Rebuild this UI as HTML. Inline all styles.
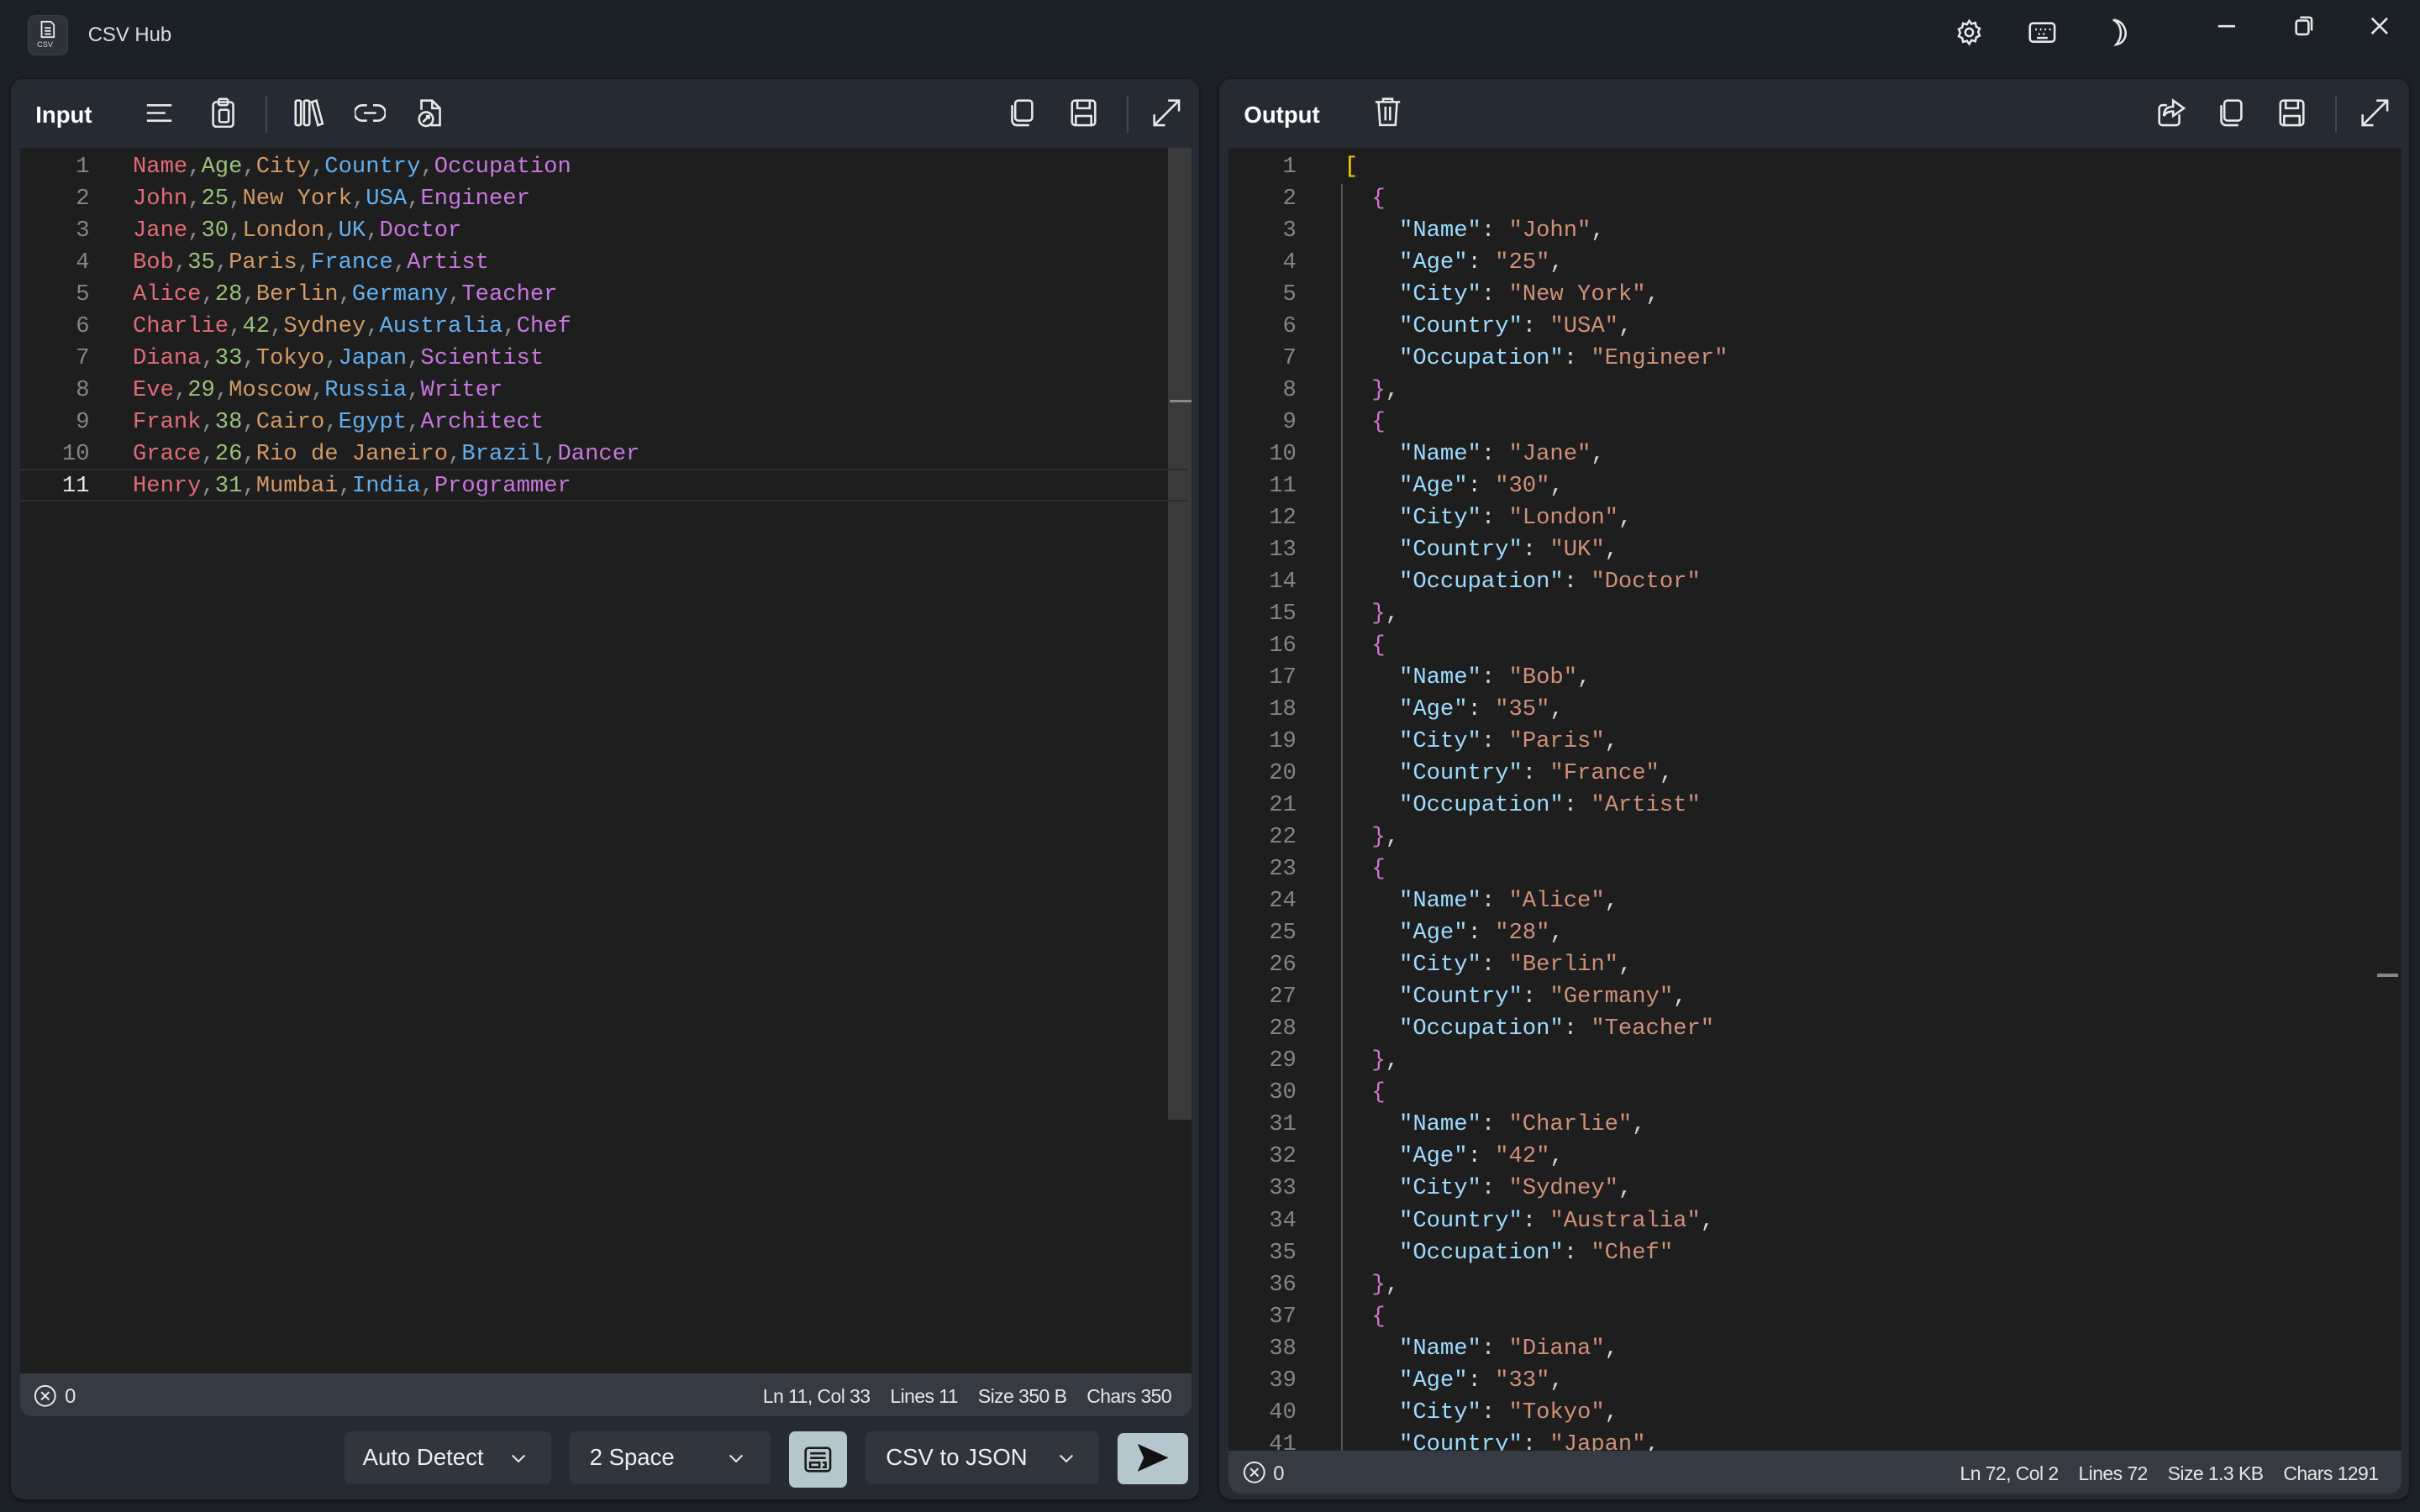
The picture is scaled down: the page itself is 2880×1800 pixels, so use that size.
<!DOCTYPE html>
<html><head><meta charset="utf-8"><style>
html,body{margin:0;padding:0;background:#1c2027;overflow:hidden;width:2880px;height:1800px}
#w{position:relative;width:1568px;height:980px;zoom:1.83673;font-family:"Liberation Sans",sans-serif;color:#e6e6e6;background:#1c2027}
.a{position:absolute}
.panel{position:absolute;background:#262b33;border-radius:8px;box-shadow:0 1px 3px rgba(0,0,0,.5)}
.ed{position:absolute;background:#1e1e1e}
.code{position:absolute;font-family:"Liberation Mono",monospace;font-size:14.8px;line-height:20.7px;white-space:pre}
.ln{position:absolute;font-family:"Liberation Mono",monospace;font-size:14.8px;line-height:20.7px;text-align:right;color:#858585;white-space:pre}
.r{color:#e06c75}.g{color:#98c379}.o{color:#d19a66}.bl{color:#61afef}.pu{color:#c678dd}.c{color:#8a8a8a}
.k{color:#9cdcfe}.s{color:#ce9178}.p{color:#d4d4d4}.b{color:#da70d6}.y{color:#ffd700}
.status{position:absolute;background:#363a42;font-size:13px;color:#e6e6e6}
.st{position:absolute;font-size:12.5px;letter-spacing:-0.3px;text-align:right;white-space:nowrap}
.st span{margin-left:13px}
.dd{position:absolute;top:928px;height:34px;background:#30353e;border-radius:4px;font-size:15px;color:#eee;line-height:34px}
svg{position:absolute;fill:none;stroke:#e8e8e8;stroke-width:1.4}
</style></head><body><div id="w">
<!-- title bar -->
<div class="a" style="left:18px;top:10px;width:25px;height:25px;background:#2e323b;border-radius:5px;border:1px solid #3a3f48"></div>
<svg style="left:24px;top:13px" width="14" height="14" viewBox="0 0 14 14"><path d="M3 1h6l2 2v8H3z M5 5h4 M5 7h4 M5 9h4" stroke-width="1"/></svg>
<div class="a" style="left:24px;top:26px;font-size:5px;color:#ddd">CSV</div>
<div class="a" style="left:57px;top:15px;font-size:13px;color:#ddd">CSV Hub</div>
<svg style="left:1267px;top:12px" width="18" height="18" viewBox="0 0 18 18"><circle cx="9" cy="9" r="2.5"/><path d="M9 1.5l1.5 2 2.5-.7.5 2.5 2.3 1.2-1 2.3 1 2.3-2.3 1.2-.5 2.5-2.5-.7L9 16.5l-1.5-2-2.5.7-.5-2.5-2.3-1.2 1-2.3-1-2.3 2.3-1.2.5-2.5 2.5.7z"/></svg>
<svg style="left:1314px;top:13px" width="19" height="16" viewBox="0 0 19 16"><rect x="1.5" y="2" width="16" height="12" rx="2"/><path d="M5 6h1M8 6h1M11 6h1M14 6h1M7 9h1M10 9h1M6 11.5h7"/></svg>
<svg style="left:1362px;top:11px" width="18" height="20" viewBox="0 0 18 20"><path d="M7 2c5 2 7 10 2 16 6-1 8-8 4-13-1.5-2-4-3-6-3z"/></svg>
<svg style="left:1436px;top:12px" width="14" height="10" viewBox="0 0 14 10"><path d="M1 5h11"/></svg>
<svg style="left:1486px;top:10px" width="14" height="14" viewBox="0 0 14 14"><rect x="2" y="3.5" width="8" height="9" rx="1.5"/><path d="M4.5 1.5h6a1.5 1.5 0 0 1 1.5 1.5v7"/></svg>
<svg style="left:1535px;top:10px" width="14" height="14" viewBox="0 0 14 14"><path d="M2 2l10 10M12 2L2 12"/></svg>

<!-- LEFT PANEL -->
<div class="panel" style="left:7px;top:51px;width:770px;height:921px"></div>
<div class="a" style="left:23px;top:66px;font-size:15px;font-weight:bold;color:#fff">Input</div>
<svg style="left:94px;top:64px" width="20" height="18" viewBox="0 0 20 18"><path d="M1 4h16M1 9h12M1 14h16"/></svg>
<svg style="left:136px;top:63px" width="18" height="20" viewBox="0 0 18 20"><rect x="2" y="3" width="13" height="16" rx="2"/><rect x="5.5" y="1" width="6" height="4" rx="1"/><rect x="6" y="8" width="6" height="8" rx="1"/></svg>
<div class="a" style="left:172px;top:62px;width:1px;height:24px;background:#444a54"></div>
<svg style="left:190px;top:63px" width="20" height="20" viewBox="0 0 20 20"><rect x="1.5" y="2" width="3.5" height="16" rx="1"/><rect x="7" y="2" width="3.5" height="16" rx="1"/><path d="M12 3l3-1 4 15-3 1z"/></svg>
<svg style="left:230px;top:64px" width="20" height="18" viewBox="0 0 20 18"><path d="M8 4H5a5 5 0 0 0 0 10h3M12 4h3a5 5 0 0 1 0 10h-3M6 9h8"/></svg>
<svg style="left:270px;top:63px" width="18" height="20" viewBox="0 0 18 20"><path d="M3 8V2h7l5 5v11h-6M10 2v5h5"/><circle cx="6" cy="14" r="4.5"/><path d="M4 16l4-4M6 12h2v2"/></svg>
<svg style="left:653px;top:63px" width="18" height="20" viewBox="0 0 18 20"><rect x="5" y="2" width="11" height="13" rx="2"/><path d="M3 5v10a3 3 0 0 0 3 3h8"/></svg>
<svg style="left:693px;top:63px" width="18" height="20" viewBox="0 0 18 20"><rect x="1.5" y="2" width="15" height="16" rx="2"/><path d="M5 2v5h8V2M4 18v-6h10v6"/></svg>
<div class="a" style="left:730px;top:62px;width:1px;height:24px;background:#444a54"></div>
<svg style="left:746px;top:63px" width="20" height="20" viewBox="0 0 20 20"><path d="M2 18L18 2M11 2h7v7M2 11v7h7"/></svg>

<div class="ed" style="left:13px;top:96px;width:759px;height:794px"></div>
<div class="a" style="left:757px;top:96px;width:15px;height:630px;background:#3a3a3a"></div>
<div class="a" style="left:758px;top:259px;width:14px;height:2px;background:#888"></div>
<div class="a" style="left:13px;top:304px;width:757px;height:19px;border-top:1.5px solid #2e2e2e;border-bottom:1.5px solid #2e2e2e"></div>
<div class="ln" style="left:20px;top:98px;width:38px">1
2
3
4
5
6
7
8
9
10
<span style="color:#e6e6e6">11</span></div>
<div class="code" style="left:86px;top:98px"><span class="r">Name</span><span class="c">,</span><span class="g">Age</span><span class="c">,</span><span class="o">City</span><span class="c">,</span><span class="bl">Country</span><span class="c">,</span><span class="pu">Occupation</span>
<span class="r">John</span><span class="c">,</span><span class="g">25</span><span class="c">,</span><span class="o">New York</span><span class="c">,</span><span class="bl">USA</span><span class="c">,</span><span class="pu">Engineer</span>
<span class="r">Jane</span><span class="c">,</span><span class="g">30</span><span class="c">,</span><span class="o">London</span><span class="c">,</span><span class="bl">UK</span><span class="c">,</span><span class="pu">Doctor</span>
<span class="r">Bob</span><span class="c">,</span><span class="g">35</span><span class="c">,</span><span class="o">Paris</span><span class="c">,</span><span class="bl">France</span><span class="c">,</span><span class="pu">Artist</span>
<span class="r">Alice</span><span class="c">,</span><span class="g">28</span><span class="c">,</span><span class="o">Berlin</span><span class="c">,</span><span class="bl">Germany</span><span class="c">,</span><span class="pu">Teacher</span>
<span class="r">Charlie</span><span class="c">,</span><span class="g">42</span><span class="c">,</span><span class="o">Sydney</span><span class="c">,</span><span class="bl">Australia</span><span class="c">,</span><span class="pu">Chef</span>
<span class="r">Diana</span><span class="c">,</span><span class="g">33</span><span class="c">,</span><span class="o">Tokyo</span><span class="c">,</span><span class="bl">Japan</span><span class="c">,</span><span class="pu">Scientist</span>
<span class="r">Eve</span><span class="c">,</span><span class="g">29</span><span class="c">,</span><span class="o">Moscow</span><span class="c">,</span><span class="bl">Russia</span><span class="c">,</span><span class="pu">Writer</span>
<span class="r">Frank</span><span class="c">,</span><span class="g">38</span><span class="c">,</span><span class="o">Cairo</span><span class="c">,</span><span class="bl">Egypt</span><span class="c">,</span><span class="pu">Architect</span>
<span class="r">Grace</span><span class="c">,</span><span class="g">26</span><span class="c">,</span><span class="o">Rio de Janeiro</span><span class="c">,</span><span class="bl">Brazil</span><span class="c">,</span><span class="pu">Dancer</span>
<span class="r">Henry</span><span class="c">,</span><span class="g">31</span><span class="c">,</span><span class="o">Mumbai</span><span class="c">,</span><span class="bl">India</span><span class="c">,</span><span class="pu">Programmer</span></div>

<div class="status" style="left:13px;top:890px;width:759px;height:28px;border-radius:0 0 8px 8px"></div>
<svg style="left:22px;top:897px" width="15" height="15" viewBox="0 0 15 15"><circle cx="7.5" cy="7.5" r="6.5" stroke-width="1.1"/><path d="M5 5l5 5M10 5l-5 5" stroke-width="1.1"/></svg>
<div class="a" style="left:42px;top:898px;font-size:13px">0</div>
<div class="st" style="right:809px;top:898px">Ln 11, Col 33<span>Lines 11</span><span>Size 350 B</span><span>Chars 350</span></div>

<div class="dd" style="left:223px;width:134px"><span style="margin-left:12px">Auto Detect</span></div>
<svg style="left:330px;top:940px" width="12" height="10" viewBox="0 0 12 10"><path d="M2 3l4 4 4-4" stroke-width="1.1"/></svg>
<div class="dd" style="left:369px;width:130px"><span style="margin-left:13px">2 Space</span></div>
<svg style="left:471px;top:940px" width="12" height="10" viewBox="0 0 12 10"><path d="M2 3l4 4 4-4" stroke-width="1.1"/></svg>
<div class="a" style="left:511px;top:928px;width:38px;height:36px;background:#b4c7cc;border-radius:4px"></div>
<svg style="left:520px;top:937px;stroke:#1a1a1a" width="20" height="18" viewBox="0 0 20 18"><rect x="2" y="1.5" width="16" height="15" rx="2"/><path d="M5 5h10M5 8h10M5 11h6v3H5zM13 11h2v3h-2"/></svg>
<div class="dd" style="left:561px;width:151px"><span style="margin-left:13px">CSV to JSON</span></div>
<svg style="left:685px;top:940px" width="12" height="10" viewBox="0 0 12 10"><path d="M2 3l4 4 4-4" stroke-width="1.1"/></svg>
<div class="a" style="left:724px;top:929px;width:46px;height:33px;background:#b4c7cc;border-radius:4px"></div>
<svg style="left:736px;top:935px;stroke:none" width="22" height="20" viewBox="0 0 22 20"><path d="M1 1l20 9-20 9 4-9z" fill="#111"/></svg>

<!-- RIGHT PANEL -->
<div class="panel" style="left:790px;top:51px;width:771px;height:921px"></div>
<div class="a" style="left:806px;top:66px;font-size:15px;font-weight:bold;color:#fff">Output</div>
<svg style="left:890px;top:62px" width="18" height="21" viewBox="0 0 18 21"><path d="M1 4h16M6 4V2h6v2M3 4l1 15h10l1-15M7.5 7v9M10.5 7v9"/></svg>
<svg style="left:1397px;top:63px" width="20" height="20" viewBox="0 0 20 20"><path d="M15 11v5a2 2 0 0 1-2 2H4a2 2 0 0 1-2-2V7a2 2 0 0 1 2-2h3M11 2l7 5-7 5V9c-3 0-5 1-6 3 0-4 2-6 6-6z"/></svg>
<svg style="left:1436px;top:63px" width="18" height="20" viewBox="0 0 18 20"><rect x="5" y="2" width="11" height="13" rx="2"/><path d="M3 5v10a3 3 0 0 0 3 3h8"/></svg>
<svg style="left:1476px;top:63px" width="18" height="20" viewBox="0 0 18 20"><rect x="1.5" y="2" width="15" height="16" rx="2"/><path d="M5 2v5h8V2M4 18v-6h10v6"/></svg>
<div class="a" style="left:1513px;top:62px;width:1px;height:24px;background:#444a54"></div>
<svg style="left:1529px;top:63px" width="20" height="20" viewBox="0 0 20 20"><path d="M2 18L18 2M11 2h7v7M2 11v7h7"/></svg>

<div class="ed" style="left:796px;top:96px;width:760px;height:844px;overflow:hidden">
<div class="a" style="left:73px;top:23px;width:1px;height:830px;background:#555"></div>
<div class="ln" style="left:0;top:2px;width:44px">1
2
3
4
5
6
7
8
9
10
11
12
13
14
15
16
17
18
19
20
21
22
23
24
25
26
27
28
29
30
31
32
33
34
35
36
37
38
39
40
41</div>
<div class="code" style="left:75px;top:2px"><span class="y">[</span>
  <span class="b">{</span>
    <span class="k">"Name"</span><span class="p">: </span><span class="s">"John"</span><span class="p">,</span>
    <span class="k">"Age"</span><span class="p">: </span><span class="s">"25"</span><span class="p">,</span>
    <span class="k">"City"</span><span class="p">: </span><span class="s">"New York"</span><span class="p">,</span>
    <span class="k">"Country"</span><span class="p">: </span><span class="s">"USA"</span><span class="p">,</span>
    <span class="k">"Occupation"</span><span class="p">: </span><span class="s">"Engineer"</span>
  <span class="b">}</span><span class="p">,</span>
  <span class="b">{</span>
    <span class="k">"Name"</span><span class="p">: </span><span class="s">"Jane"</span><span class="p">,</span>
    <span class="k">"Age"</span><span class="p">: </span><span class="s">"30"</span><span class="p">,</span>
    <span class="k">"City"</span><span class="p">: </span><span class="s">"London"</span><span class="p">,</span>
    <span class="k">"Country"</span><span class="p">: </span><span class="s">"UK"</span><span class="p">,</span>
    <span class="k">"Occupation"</span><span class="p">: </span><span class="s">"Doctor"</span>
  <span class="b">}</span><span class="p">,</span>
  <span class="b">{</span>
    <span class="k">"Name"</span><span class="p">: </span><span class="s">"Bob"</span><span class="p">,</span>
    <span class="k">"Age"</span><span class="p">: </span><span class="s">"35"</span><span class="p">,</span>
    <span class="k">"City"</span><span class="p">: </span><span class="s">"Paris"</span><span class="p">,</span>
    <span class="k">"Country"</span><span class="p">: </span><span class="s">"France"</span><span class="p">,</span>
    <span class="k">"Occupation"</span><span class="p">: </span><span class="s">"Artist"</span>
  <span class="b">}</span><span class="p">,</span>
  <span class="b">{</span>
    <span class="k">"Name"</span><span class="p">: </span><span class="s">"Alice"</span><span class="p">,</span>
    <span class="k">"Age"</span><span class="p">: </span><span class="s">"28"</span><span class="p">,</span>
    <span class="k">"City"</span><span class="p">: </span><span class="s">"Berlin"</span><span class="p">,</span>
    <span class="k">"Country"</span><span class="p">: </span><span class="s">"Germany"</span><span class="p">,</span>
    <span class="k">"Occupation"</span><span class="p">: </span><span class="s">"Teacher"</span>
  <span class="b">}</span><span class="p">,</span>
  <span class="b">{</span>
    <span class="k">"Name"</span><span class="p">: </span><span class="s">"Charlie"</span><span class="p">,</span>
    <span class="k">"Age"</span><span class="p">: </span><span class="s">"42"</span><span class="p">,</span>
    <span class="k">"City"</span><span class="p">: </span><span class="s">"Sydney"</span><span class="p">,</span>
    <span class="k">"Country"</span><span class="p">: </span><span class="s">"Australia"</span><span class="p">,</span>
    <span class="k">"Occupation"</span><span class="p">: </span><span class="s">"Chef"</span>
  <span class="b">}</span><span class="p">,</span>
  <span class="b">{</span>
    <span class="k">"Name"</span><span class="p">: </span><span class="s">"Diana"</span><span class="p">,</span>
    <span class="k">"Age"</span><span class="p">: </span><span class="s">"33"</span><span class="p">,</span>
    <span class="k">"City"</span><span class="p">: </span><span class="s">"Tokyo"</span><span class="p">,</span>
    <span class="k">"Country"</span><span class="p">: </span><span class="s">"Japan"</span><span class="p">,</span></div>
<div class="a" style="left:744px;top:535px;width:14px;height:2px;background:#888"></div>
</div>

<div class="status" style="left:796px;top:940px;width:760px;height:28px;border-radius:0 0 8px 8px"></div>
<svg style="left:805px;top:947px" width="15" height="15" viewBox="0 0 15 15"><circle cx="7.5" cy="7.5" r="6.5" stroke-width="1.1"/><path d="M5 5l5 5M10 5l-5 5" stroke-width="1.1"/></svg>
<div class="a" style="left:825px;top:948px;font-size:13px">0</div>
<div class="st" style="right:27px;top:948px">Ln 72, Col 2<span>Lines 72</span><span>Size 1.3 KB</span><span>Chars 1291</span></div>
</div></body></html>
